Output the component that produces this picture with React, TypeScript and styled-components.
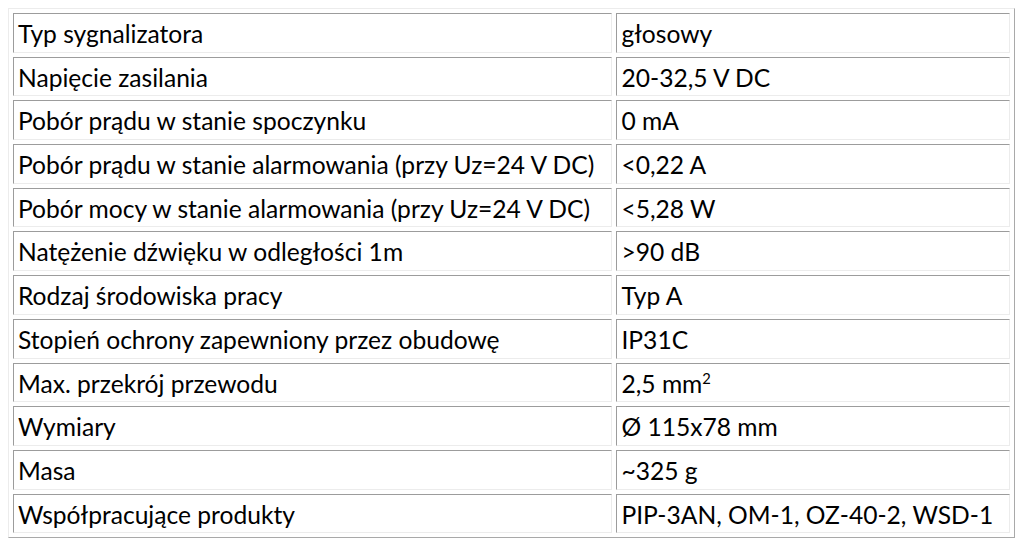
import styled, { createGlobalStyle } from 'styled-components'

const GlobalStyle = createGlobalStyle`
  html, body {
    margin: 0;
    padding: 0;
    background: #ffffff;
  }
  body {
    padding: 8px 0 0 8px;
  }
`

const SpecTable = styled.table`
  width: 1007px;
  border-collapse: separate;
  border-spacing: 4px;
  border-style: solid;
  border-width: 1px;
  border-color: #ececec #a9a9a9 #a9a9a9 #ececec;
  font-family: Lato, 'Noto Sans', sans-serif;
  font-size: 24.6px;
  line-height: 1;
  color: #000;
`

const Cell = styled.td<{ $w: number }>`
  box-sizing: border-box;
  width: ${(p) => p.$w}px;
  height: 39.7px;
  padding: 3px 4px 0;
  border-style: solid;
  border-width: 1px;
  border-color: #9c9c9c #ececec #ececec #9c9c9c;
  vertical-align: middle;
  white-space: nowrap;
`

const Sup = styled.sup`
  font-size: 0.6em;
  line-height: 0;
`

const rows: [string, React.ReactNode][] = [
  ['Typ sygnalizatora', 'głosowy'],
  ['Napięcie zasilania', '20-32,5 V DC'],
  ['Pobór prądu w stanie spoczynku', '0 mA'],
  ['Pobór prądu w stanie alarmowania (przy Uz=24 V DC)', '<0,22 A'],
  ['Pobór mocy w stanie alarmowania (przy Uz=24 V DC)', '<5,28 W'],
  ['Natężenie dźwięku w odległości 1m', '>90 dB'],
  ['Rodzaj środowiska pracy', 'Typ A'],
  ['Stopień ochrony zapewniony przez obudowę', 'IP31C'],
  [
    'Max. przekrój przewodu',
    <>
      2,5 mm<Sup>2</Sup>
    </>,
  ],
  ['Wymiary', 'Ø 115x78 mm'],
  ['Masa', '~325 g'],
  ['Współpracujące produkty', 'PIP-3AN, OM-1, OZ-40-2, WSD-1'],
]

export default function App() {
  return (
    <>
      <GlobalStyle />
      <SpecTable>
        <tbody>
          {rows.map(([label, value], i) => (
            <tr key={i}>
              <Cell $w={600}>{label}</Cell>
              <Cell $w={394}>{value}</Cell>
            </tr>
          ))}
        </tbody>
      </SpecTable>
    </>
  )
}
